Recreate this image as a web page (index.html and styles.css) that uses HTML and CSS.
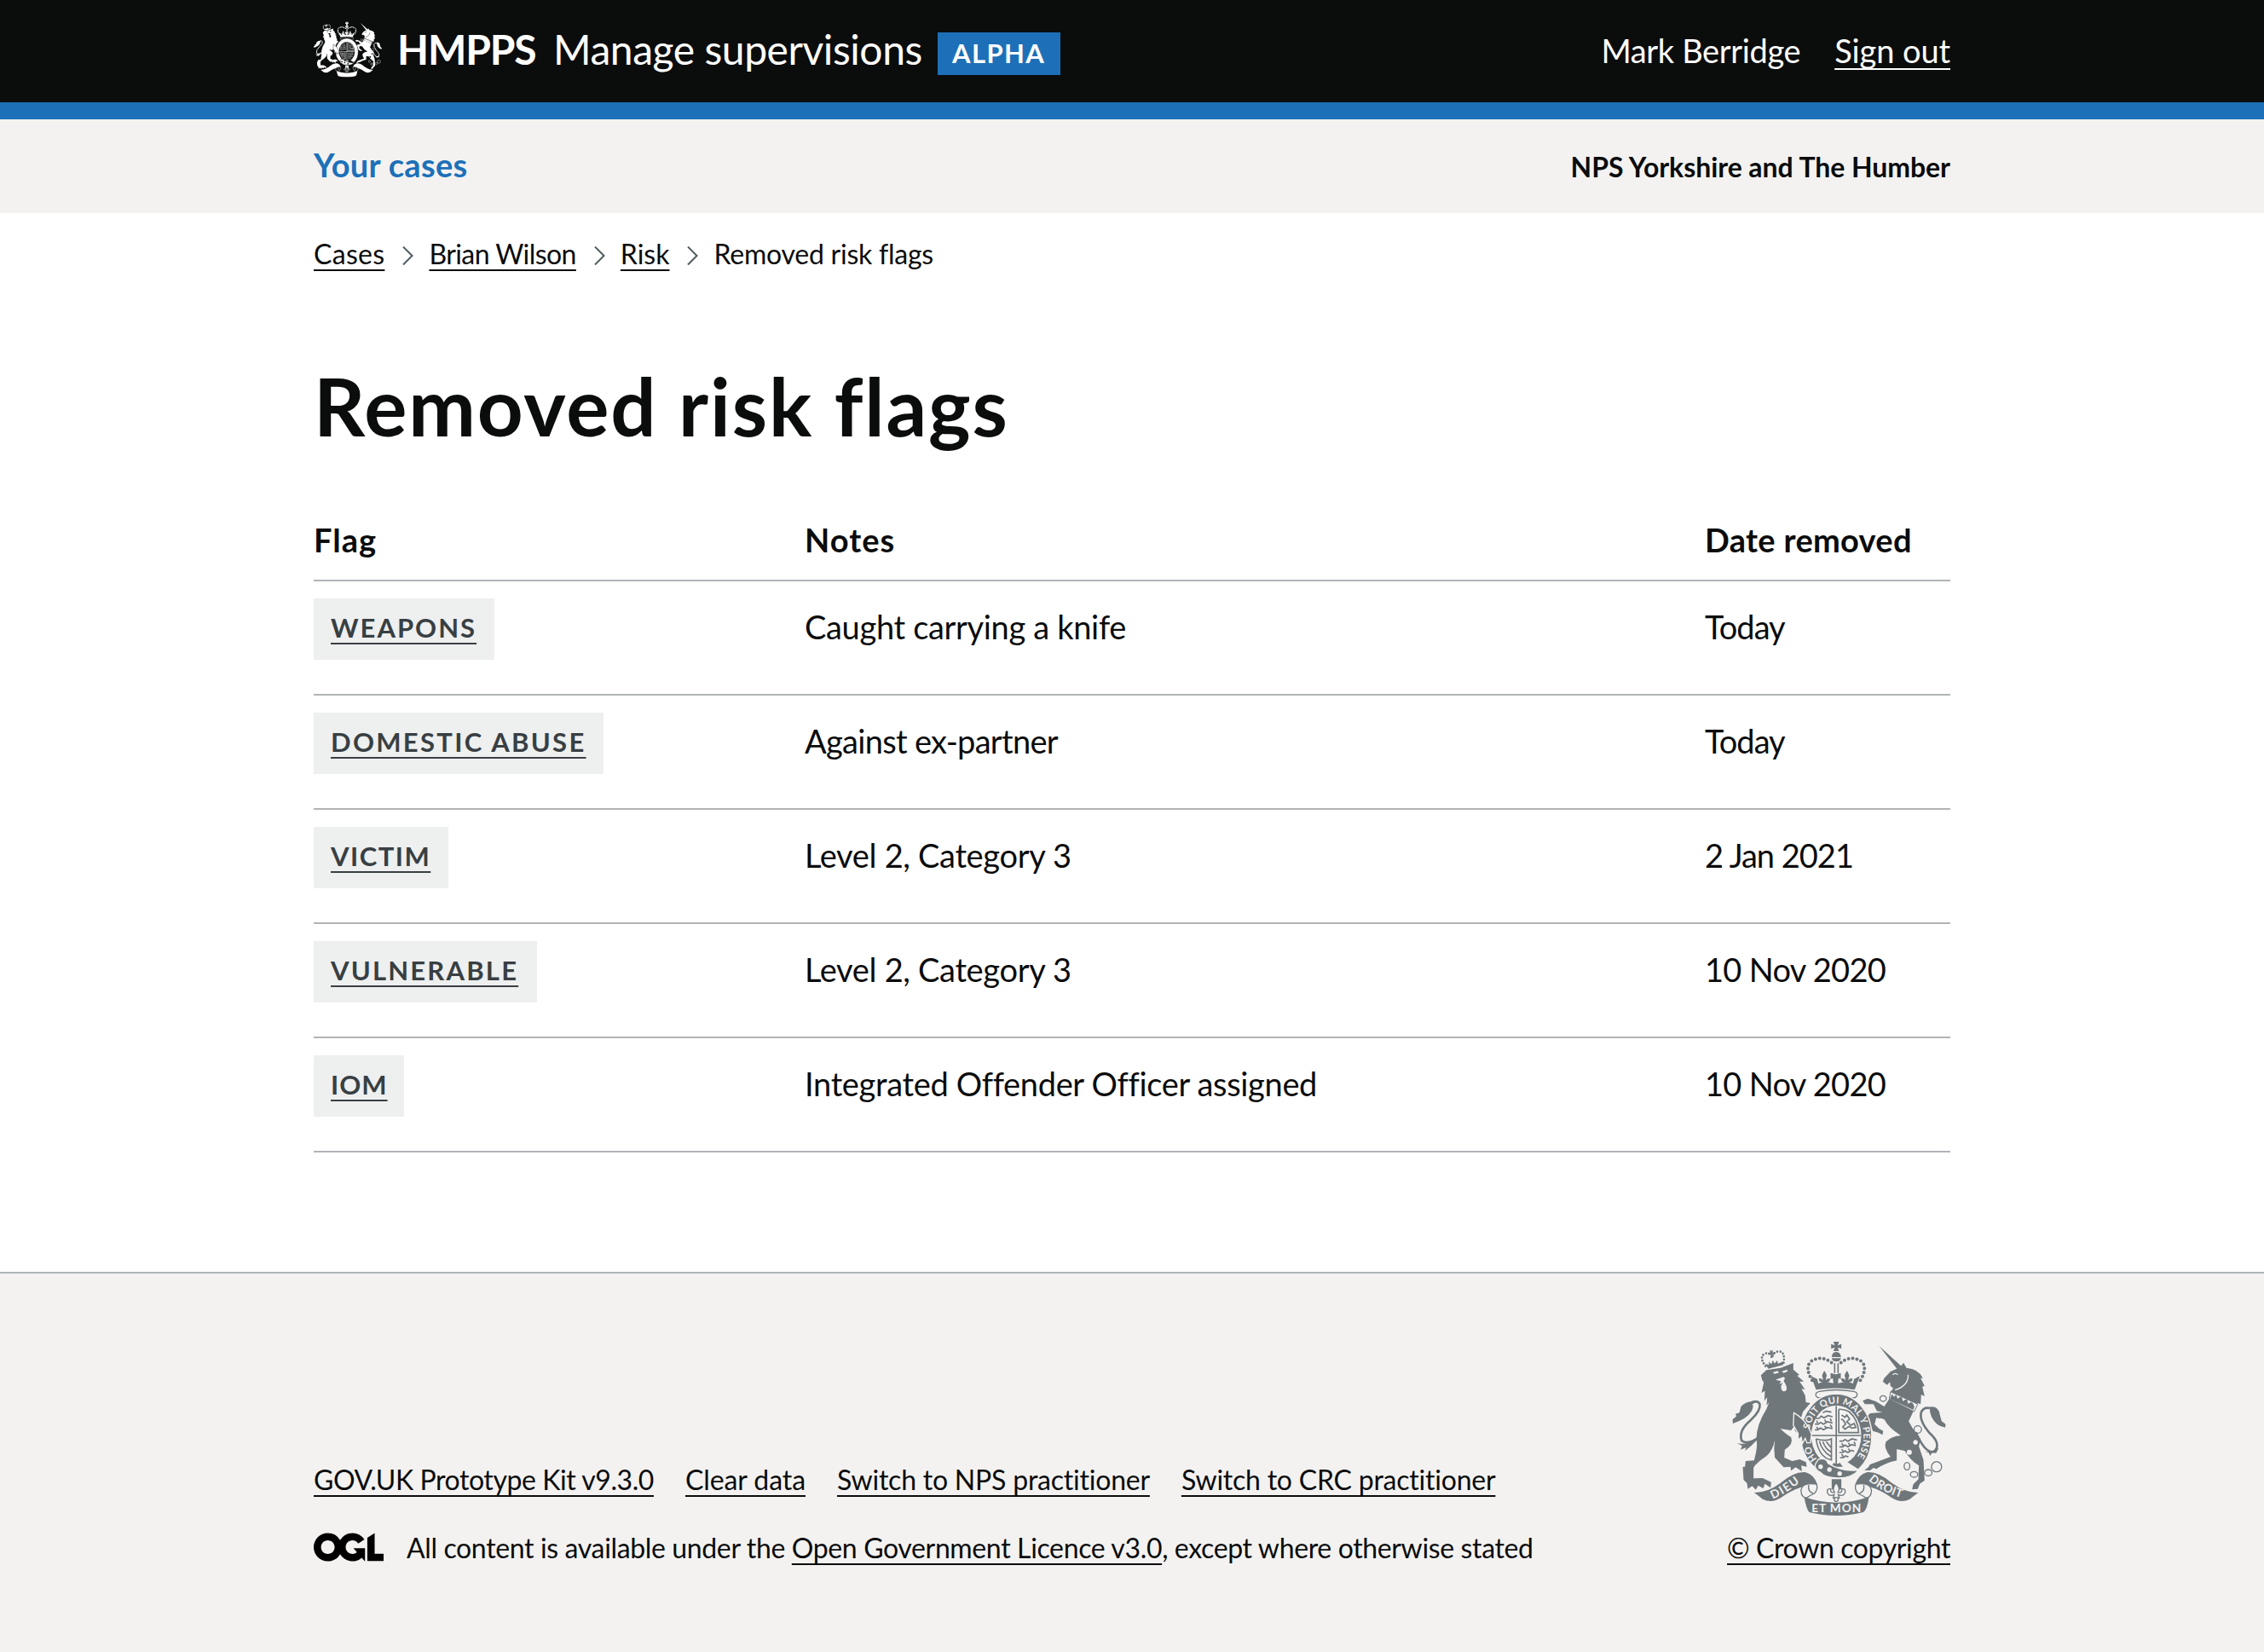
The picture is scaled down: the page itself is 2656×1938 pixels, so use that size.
FILE: index.html
```html
<!DOCTYPE html>
<html lang="en">
<head>
<meta charset="utf-8">
<title>Removed risk flags</title>
<link rel="stylesheet" href="styles.css">
</head>
<body>
<svg class="sprite" aria-hidden="true">
  <symbol id="crest" viewBox="155 72 752 612">
    <!-- imperial crown -->
    <path d="M511 72h20l-5 13 13-5v17l-13-5 5 13h-20l5-13-13 5v-17l13 5zM505 126q1-18 16-18t17 18zM505 130h33q-3 12-17 12t-16-12z"/>
    <path class="pearls" d="M436 208Q408 160 434 140Q470 118 508 148M606 208Q634 160 608 140Q572 118 534 148"/>
    <path d="M513 148h5v34h-5zM525 148h5v34h-5zM432 193l22 10 4 16 14-5q-14 0-12-12 8-4 14 6 0-12-3-16 4-12 8-18 5 6 9 18-4 4-3 16 6-10 14-6 2 12-10 12l22 4-2-18-8 4v-22l18 5 18-5v22l-8-4-2 18 22-4q-12 0-10-12 8-4 14 6 1-12-3-16 4-12 9-18 4 6 8 18-3 4-3 16 6-10 14-6 2 12-12 12l14 5 4-16 20-10-18 48Q521 230 450 241z"/>
    <path class="outline" d="M462 247Q521 236 582 247Q598 250 594 262Q588 272 574 269Q521 260 468 269Q452 272 449 260Q448 250 462 247z"/>
    <!-- lion -->
    <path class="pearls small" d="M272 158Q248 125 270 114Q286 108 292 122M336 146Q342 106 318 106Q302 108 298 122"/>
    <path d="M287 101l6 3 5-3-1 9 7-1v8l-8-1 2 12-9 1 2-12-8 2-1-7 7-1zM271 150l14 3-2-11 10 9 5-14 6 12 9-11 3 11 19-8-1 13-52 13z"/>
    <path d="M256 190L275 172L325 164L370 147L370 170L391 188L384 192L407 212L392 212L411 240L399 238L412 262L414 285L430 288L404 318L396 345L424 382L430 425L418 430L412 412L402 432L398 408L385 418L387 395L376 386L374 368L362 384L324 378Q345 398 362 408Q372 432 340 452L338 480L366 492L392 486L415 496L417 512L398 508L400 528L378 514L362 526L360 512L336 514L305 480Q300 450 305 418Q298 455 275 475Q240 498 230 515L230 553L262 552L292 566L290 586L270 572L264 588L246 578L238 593L225 580L210 590L207 570L195 558L192 512L200 512L202 492L232 490Q246 440 240 415Q240 365 275 310L285 285L276 296L278 268L268 280L270 245L258 252L266 215L260 206z"/>
    <path class="cut" d="M297 180l18-5 4 6-14 4zM330 176l18-6 2 6-14 6zM307 206l28-10 6 4-5 10 8 14q8 22-7 23-12-2-10-20l6-10-12 4 6-10z"/>
    <path class="tail" d="M262 398Q210 440 188 420Q176 385 220 348Q256 315 252 292Q245 276 222 286"/>
    <path d="M240 284Q205 278 186 300L180 322L166 326L170 334L156 346L157 360Q208 342 222 318Q232 300 226 292zM172 430Q205 436 246 414Q222 440 200 456L204 444L184 452L190 438z"/>
    <!-- unicorn -->
    <path d="M672 87L752 160L735 168z"/>
    <path d="M685 212L690 200L712 177L745 162L758 146L768 164Q812 168 826 200L818 200L832 228L824 230L832 264L820 258L818 292L808 288L792 318L776 352Q800 398 818 414L812 440L828 488L832 560L815 572L808 590L788 592L792 574L810 556L812 508Q782 490 762 456L734 450L734 490Q690 500 662 520L652 516L640 525L620 524L634 514L640 504L712 477Q686 445 696 424Q715 405 748 402Q705 375 690 345L662 340L656 362L672 378L686 386L684 400L670 392L650 386L634 346L626 340L640 324L684 320L664 316L652 292L622 292L614 280L632 272L660 282L690 300L706 276L714 245L722 236L712 228L710 214L700 224z"/>
    <path class="cutline" d="M774 188Q776 226 728 242M720 188Q728 180 738 188"/>
    <path class="band" d="M712 248L808 292L795 318L708 274z"/>
    <path d="M712 268L718 256L724 266L732 258L737 273L744 267L752 268L756 282L764 275L771 277L774 291L783 284L790 288L796 300L792 312L710 274z"/>
    <path class="tail" d="M800 388Q835 470 866 458Q892 432 850 394Q812 350 820 320Q830 300 850 306"/>
    <path d="M842 304Q880 292 886 330L892 352L906 362L905 374L886 368L876 362Q850 340 850 306zM830 458Q855 462 882 446L872 464L858 462L852 474L846 462z"/>
    <g class="outline">
      <ellipse cx="686" cy="272" rx="11" ry="10"/><ellipse cx="808" cy="381" rx="13" ry="13"/>
      <ellipse cx="770" cy="510" rx="10" ry="13"/><ellipse cx="795" cy="539" rx="13" ry="10"/>
      <ellipse cx="845" cy="533" rx="13" ry="11"/><circle cx="874" cy="512" r="18"/>
    </g>
    <ellipse class="outline link" cx="677" cy="357" rx="12" ry="14"/>
    <g class="cut"><circle cx="800" cy="426" r="8"/><circle cx="778" cy="461" r="9"/><circle cx="808" cy="381" r="10"/></g>
    <!-- garter and shield -->
    <path class="garter" d="M521 255A126 147 0 0 1 646 400Q646 480 598 522L560 498L470 500L452 520Q396 475 396 400A126 147 0 0 1 521 255z"/>
    <ellipse class="cut" cx="521" cy="402" rx="88" ry="106"/>
    <g class="shield">
      <path d="M521 298V508M434 402H608"/>
      <path d="M448 342h12l8-8 10 6 14-8 16 4M446 362h12l8-6 10 6 14-8 18 4M446 382h10l10-6 10 6 14-8 18 4M474 322l12-6 18 4M452 350l4 8M480 346l6 10M500 342l4 10M452 372l6 8M480 368l8 10M500 364l6 10"/>
      <path d="M532 422h12l8-6 10 6 14-8 18 4M532 442h12l8-6 10 6 14-8 14 4M532 462h12l8-6 10 6 14-8 8 4M534 480h12l8-6 10 4M540 430l6 8M564 428l6 10M584 424l4 10M540 450l6 8M564 448l6 10M540 468l6 8"/>
      <path d="M530 310V392H600Q598 345 566 318Q548 308 530 310M540 330l12 8 6-8 10 14-10 10 14 12 12-6 6 14-14 2-10-6-14 10-8-8 10-10-8-14-8-4"/>
      <path d="M450 414Q485 424 504 414V488Q460 480 450 414M462 422Q470 456 502 476M474 424Q482 448 502 460M486 424L502 444"/>
    </g>
    <path d="M512 498q10 8 22 0l10 14h-40z"/>
    <!-- lion's foreleg over the garter -->
    <path class="garter" d="M372 322Q405 340 424 374L434 398L430 428L418 428L412 412L402 430L398 408L386 418L387 395L370 366z"/>
    <path class="garter" d="M458 486Q486 478 492 500Q540 530 600 524Q575 552 530 552Q480 550 466 532Q440 520 448 502z"/>
    <g class="cut"><circle cx="497" cy="522" r="8"/><circle cx="533" cy="536" r="8"/><circle cx="466" cy="512" r="8"/></g>
    <path d="M505 556h34v36h-34z"/>
    <path class="outline filled" d="M521 568Q505 588 515 602Q498 606 502 590Q486 588 490 604Q496 618 514 610L510 622H532L528 610Q546 618 552 604Q556 588 540 590Q544 606 527 602Q537 588 521 568z"/>
    <circle class="outline filled" cx="521" cy="627" r="7"/>
    <!-- ribbon -->
    <g id="ribbon-side">
      <path d="M232 603Q278 604 324 570Q372 528 412 531Q444 540 454 574Q426 566 404 582Q360 596 325 622Q294 642 262 626Q250 616 232 603z"/>
      <path class="outline filled" d="M452 573Q400 566 397 596Q398 620 416 622Q430 612 444 606Q458 592 452 573"/>
      <path class="outline" d="M424 576Q420 600 440 606"/>
    </g>
    <use href="#ribbon-side" transform="translate(1042 0) scale(-1 1)"/>
    <path d="M408 618Q521 658 636 618Q630 664 616 672Q521 696 426 672Q416 662 408 618z"/>
  </symbol>
</svg>

<header class="header">
  <div class="container header-row">
    <div class="brand">
      <svg class="crest-small" viewBox="155 72 752 612" aria-hidden="true"><use href="#crest" x="155" y="72" width="752" height="612"/></svg>
      <span class="org">HMPPS</span>
      <span class="service">Manage supervisions</span>
      <span class="phase">ALPHA</span>
    </div>
    <nav class="account">
      <span class="user">Mark Berridge</span>
      <a class="sign-out" href="#">Sign out</a>
    </nav>
  </div>
</header>
<div class="subnav">
  <div class="container subnav-row">
    <a class="nav-link" href="#">Your cases</a>
    <span class="region">NPS Yorkshire and The Humber</span>
  </div>
</div>
<div class="container">
  <nav class="crumbs">
    <a class="crumb-cases" href="#">Cases</a>
    <svg class="chevron" viewBox="0 0 13 22"><path d="M1 .5L11.500 11L1 21.500"/></svg>
    <a class="crumb-person" href="#">Brian Wilson</a>
    <svg class="chevron" viewBox="0 0 13 22"><path d="M1 .5L11.500 11L1 21.500"/></svg>
    <a class="crumb-risk" href="#">Risk</a>
    <svg class="chevron" viewBox="0 0 13 22"><path d="M1 .5L11.500 11L1 21.500"/></svg>
    <span class="crumb-current">Removed risk flags</span>
  </nav>
  <main>
    <h1>Removed risk flags</h1>
    <table class="flags">
      <thead><tr><th class="col-flag">Flag</th><th class="col-notes">Notes</th><th class="col-date">Date removed</th></tr></thead>
      <tbody>
        <tr><td><a class="tag tag-weapons" href="#">WEAPONS</a></td><td>Caught carrying a knife</td><td class="tight">Today</td></tr>
        <tr><td><a class="tag tag-abuse" href="#">DOMESTIC ABUSE</a></td><td class="snug">Against ex-partner</td><td class="tight">Today</td></tr>
        <tr><td><a class="tag tag-victim" href="#">VICTIM</a></td><td>Level 2, Category 3</td><td class="tight">2 Jan 2021</td></tr>
        <tr><td><a class="tag tag-vulnerable" href="#">VULNERABLE</a></td><td>Level 2, Category 3</td><td class="snug">10 Nov 2020</td></tr>
        <tr><td><a class="tag tag-iom" href="#">IOM</a></td><td>Integrated Offender Officer assigned</td><td class="snug">10 Nov 2020</td></tr>
      </tbody>
    </table>
  </main>
</div>
<footer class="footer">
  <div class="container footer-row">
    <div class="footer-meta">
      <div class="footer-links">
        <a class="link-kit" href="#">GOV.UK Prototype Kit v9.3.0</a>
        <a class="link-clear" href="#">Clear data</a>
        <a href="#">Switch to NPS practitioner</a>
        <a href="#">Switch to CRC practitioner</a>
      </div>
      <div class="licence">
        <svg class="ogl" viewBox="0 0 483.2 195.7" aria-label="OGL"><path d="M421.5 142.8V.1l-50.7 32.3v161.1h112.4v-50.7zm-122.3-9.6A47.12 47.12 0 0 1 221 97.800c0-26 21.100-47.100 47.100-47.100 16.700 0 31.400 8.700 39.700 21.800l42.700-27.200A97.630 97.630 0 0 0 268.100 0c-36.500 0-68.300 20.100-85.100 49.700A98 98 0 0 0 97.800 0C43.900 0 0 43.900 0 97.800s43.900 97.800 97.800 97.800c36.500 0 68.300-20.100 85.100-49.700a97.760 97.760 0 0 0 149.600 25.400l19.400 22.200h3v-87.800h-80l24.300 27.500zM97.800 145c-26 0-47.100-21.100-47.100-47.100s21.100-47.100 47.100-47.100 47.100 21.100 47.100 47.100S123.800 145 97.800 145"/></svg>
        <span>All content is available under the <a href="#">Open Government Licence v3.0</a>, except where otherwise stated</span>
      </div>
    </div>
    <a class="copyright" href="#">
      <svg class="crest-large" viewBox="155 72 752 612" aria-hidden="true">
        <use href="#crest" x="155" y="72" width="752" height="612"/>
        <defs>
          <path id="motto-ring" d="M455 486A96 114 0 1 1 587 486"/>
          <path id="motto-left" d="M298 626Q345 606 402 560"/>
          <path id="motto-right" d="M634 559Q680 602 760 624"/>
        </defs>
        <g class="motto">
          <text class="ring"><textPath href="#motto-ring" startOffset="2">HO</textPath></text>
          <text class="ring"><textPath href="#motto-ring" startOffset="112" textLength="385">SOIT QUI MAL Y PENSE</textPath></text>
          <text><textPath href="#motto-left" textLength="112">DIEU</textPath></text>
          <text><textPath href="#motto-right" textLength="132">DROIT</textPath></text>
          <text x="434" y="672" textLength="174">ET MON</text>
        </g>
      </svg>
      <span class="copy-text">© Crown copyright</span>
    </a>
  </div>
</footer>
</body>
</html>
```
FILE: styles.css
```css
* { box-sizing: border-box; }
body { margin: 0; background: #fff; color: #0b0c0c; font-family: Lato, "Liberation Sans", sans-serif; font-size: 38px; line-height: 50px; }
a { color: inherit; text-decoration: underline; text-decoration-thickness: 2px; text-underline-offset: 6px; text-decoration-skip-ink: none; }
.sprite { display: none; }
.container { width: 1920px; margin: 0 auto; }

.header { --paper: #0b0c0c; height: 140px; background: #0b0c0c; border-bottom: 20px solid #1d70b8; color: #fff; }
.header-row { display: flex; justify-content: space-between; align-items: flex-start; }
.brand { display: flex; align-items: flex-start; }
.crest-small { width: 80px; height: 68px; margin-top: 24px; margin-right: 18px; }
.org, .service { font-size: 48px; line-height: 48px; padding-top: 34px; }
.org { width: 183px; font-weight: 700; letter-spacing: -1.1px; }
.service { width: 451px; letter-spacing: -.44px; }
.phase { width: 144px; height: 50px; margin-top: 38px; padding: 0 0 0 17px; background: #1d70b8; font-size: 31px; font-weight: 700; line-height: 48px; letter-spacing: 1.4px; }
.account { display: flex; gap: 40px; padding-top: 34px; letter-spacing: -.36px; }
.sign-out { letter-spacing: -.1px; }

.subnav { height: 110px; background: #f3f2f1; }
.subnav-row { display: flex; justify-content: space-between; }
.nav-link { padding-top: 28px; color: #1d70b8; font-weight: 700; letter-spacing: .3px; text-decoration: none; }
.region { padding-top: 31px; font-size: 32px; font-weight: 700; letter-spacing: -.06px; }

.crumbs { display: flex; align-items: center; padding-top: 23px; font-size: 32px; }
.chevron { width: 13px; height: 22px; margin: 3px 18px 0 21px; fill: none; stroke: #505a5f; stroke-width: 2; }
.crumb-cases { letter-spacing: .3px; }
.crumb-person { letter-spacing: -.57px; }
.crumb-current { letter-spacing: -.24px; }

h1 { margin: 103px 0 0; font-size: 94px; font-weight: 700; line-height: 100px; letter-spacing: 1.86px; }

.flags { width: 100%; margin-top: 79px; border-collapse: collapse; table-layout: fixed; }
.flags th, .flags td { padding: 0; text-align: left; vertical-align: top; border-bottom: 2px solid #b1b4b6; }
.flags th { height: 76px; padding-top: 3px; font-weight: 700; letter-spacing: 1px; }
.flags td { height: 134px; padding-top: 28px; letter-spacing: -.33px; }
.flags td:first-child { padding-top: 20px; }
.flags .tight { letter-spacing: -1px; }
.flags .snug { letter-spacing: -.7px; }
.col-flag { width: 576px; }
.flags .col-date { width: 288px; letter-spacing: .3px; }
.tag { display: inline-block; height: 72px; padding: 16px 20px 20px; background: #eeefef; color: #383f43; font-size: 31px; font-weight: 700; line-height: 36px; letter-spacing: 2px; vertical-align: top; }
.tag-weapons { width: 212px; }
.tag-abuse { width: 340px; letter-spacing: 2.3px; }
.tag-victim { width: 158px; letter-spacing: 1.5px; }
.tag-vulnerable { width: 262px; letter-spacing: 2.2px; }
.tag-iom { width: 106px; letter-spacing: 1px; }

.footer { --paper: #f3f2f1; height: 446px; margin-top: 140px; background: #f3f2f1; border-top: 2px solid #b1b4b6; font-size: 32px; }
.footer-row { display: flex; justify-content: space-between; align-items: flex-start; padding-top: 80px; }
.footer-meta { padding-top: 137px; }
.footer-links { display: flex; gap: 37px; letter-spacing: -.22px; }
.link-kit { letter-spacing: -.43px; }
.link-clear { letter-spacing: -.09px; }
.licence { display: flex; margin-top: 30px; letter-spacing: -.36px; }
.ogl { width: 82px; height: 34px; margin: 7px 27px 0 0; }
.copyright { display: flex; flex-direction: column; align-items: flex-end; letter-spacing: -.38px; }
.crest-large { width: 251px; height: 204px; margin-right: 5px; color: #6f777b; }
.copy-text { margin-top: 13px; }

.crest-small, .crest-large { fill: currentColor; }
.pearls { fill: none; stroke: currentColor; stroke-width: 12; stroke-linecap: round; stroke-dasharray: 0 15; }
.small { stroke-width: 8; stroke-dasharray: 0 11; }
.outline { fill: none; stroke: currentColor; stroke-width: 4; }
.filled { fill: var(--paper); }
.link { stroke: var(--paper); }
.tail { fill: none; stroke: currentColor; stroke-width: 8; }
.shield { fill: none; stroke: currentColor; stroke-width: 5; }
.cut { fill: var(--paper); }
.cutline { fill: none; stroke: var(--paper); stroke-width: 4; }
.band { fill: var(--paper); stroke: currentColor; stroke-width: 3; }
.garter { stroke: var(--paper); stroke-width: 4; }
.motto { fill: var(--paper); font-size: 41px; font-weight: 700; letter-spacing: 0; }
.ring { font-size: 33px; }
```
